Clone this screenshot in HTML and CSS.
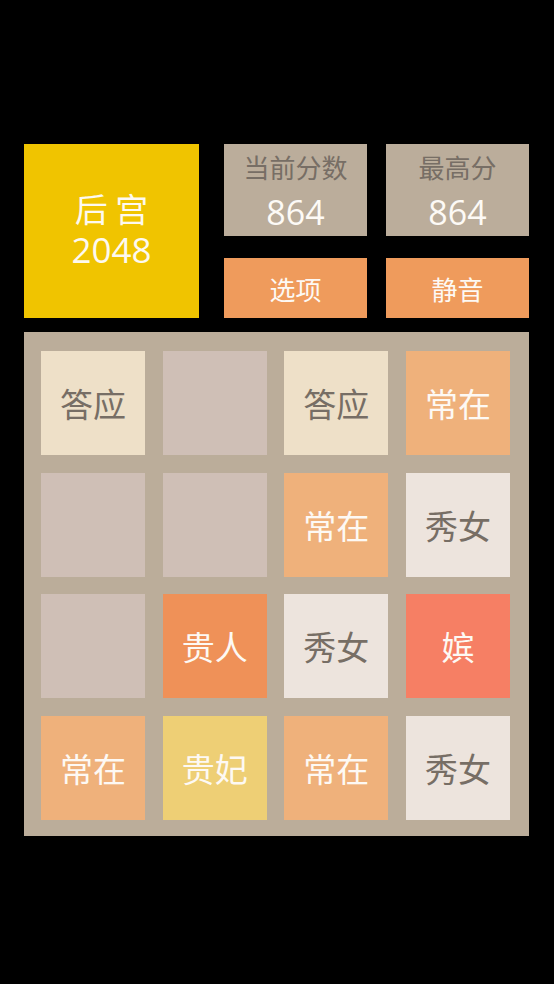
FILE: index.html
```html
<!DOCTYPE html>
<html lang="zh">
<head>
<meta charset="utf-8">
<title>后宫 2048</title>
<link rel="stylesheet" href="styles.css">
</head>
<body>
<div class="page">
  <div class="header">
    <div class="logo"><div class="logo-name">后 宫</div><div class="logo-num">2048</div></div>
    <div class="panel">
      <div class="scores">
        <div class="score"><div class="score-label">当前分数</div><div class="score-value">864</div></div>
        <div class="score"><div class="score-label">最高分</div><div class="score-value">864</div></div>
      </div>
      <div class="buttons">
        <div class="btn">选项</div>
        <div class="btn">静音</div>
      </div>
    </div>
  </div>
  <div class="board">
    <div class="tile t-daying">答应</div>
    <div class="tile t-empty"></div>
    <div class="tile t-daying">答应</div>
    <div class="tile t-changzai">常在</div>

    <div class="tile t-empty"></div>
    <div class="tile t-empty"></div>
    <div class="tile t-changzai">常在</div>
    <div class="tile t-xiunv">秀女</div>

    <div class="tile t-empty"></div>
    <div class="tile t-guiren">贵人</div>
    <div class="tile t-xiunv">秀女</div>
    <div class="tile t-pin">嫔</div>

    <div class="tile t-changzai">常在</div>
    <div class="tile t-guifei">贵妃</div>
    <div class="tile t-changzai">常在</div>
    <div class="tile t-xiunv">秀女</div>
  </div>
</div>
</body>
</html>
```
FILE: styles.css
```css
html, body {
  margin: 0;
  padding: 0;
  background: #000;
}
body {
  font-family: "Open Sans", "Noto Sans CJK SC", sans-serif;
}
.page {
  padding: 144px 0 0 24px;
  width: 505px;
}
.header {
  display: flex;
  gap: 25px;
  height: 174px;
}
.logo {
  width: 175px;
  height: 174px;
  background: #f0c400;
  color: #fdf9f0;
  display: flex;
  flex-direction: column;
  align-items: center;
  justify-content: center;
  gap: 6px;
}
.logo-name {
  font-family: "Noto Sans CJK SC", sans-serif;
  font-size: 33px;
  line-height: 36px;
  margin-top: -4px;
}
.logo-num {
  font-size: 35px;
  line-height: 36px;
}
.panel {
  display: flex;
  flex-direction: column;
  gap: 22px;
  width: 305px;
}
.scores, .buttons {
  display: flex;
  gap: 19px;
}
.score {
  width: 143px;
  height: 92px;
  background: #bbad9b;
  display: flex;
  flex-direction: column;
  align-items: center;
}
.score-label {
  font-family: "Noto Sans CJK SC", sans-serif;
  color: #776e65;
  font-size: 26px;
  line-height: 30px;
  margin-top: 8px;
}
.score-value {
  color: #fdfaf6;
  font-size: 34px;
  line-height: 40px;
  margin-top: 10px;
}
.btn {
  width: 143px;
  height: 60px;
  background: #ef9b5c;
  color: #fdf9f4;
  font-family: "Noto Sans CJK SC", sans-serif;
  font-size: 26px;
  display: flex;
  align-items: center;
  justify-content: center;
}
.board {
  margin-top: 14px;
  width: 505px;
  height: 504px;
  box-sizing: border-box;
  padding: 19px 19px 16px 17px;
  background: #bbad9a;
  display: grid;
  grid-template-columns: repeat(4, 104px);
  grid-template-rows: repeat(4, 104px);
  gap: 17.67px;
}
.tile {
  display: flex;
  align-items: center;
  justify-content: center;
  font-family: "Noto Sans CJK SC", sans-serif;
  font-size: 33px;
  color: #fdf9f4;
}
.t-empty { background: #cfbfb6; }
.t-daying { background: #eee0c8; color: #776e65; }
.t-xiunv { background: #ede4dd; color: #776e65; }
.t-changzai { background: #efb17b; }
.t-guiren { background: #ef9158; }
.t-pin { background: #f67f64; }
.t-guifei { background: #eecf75; }
```
